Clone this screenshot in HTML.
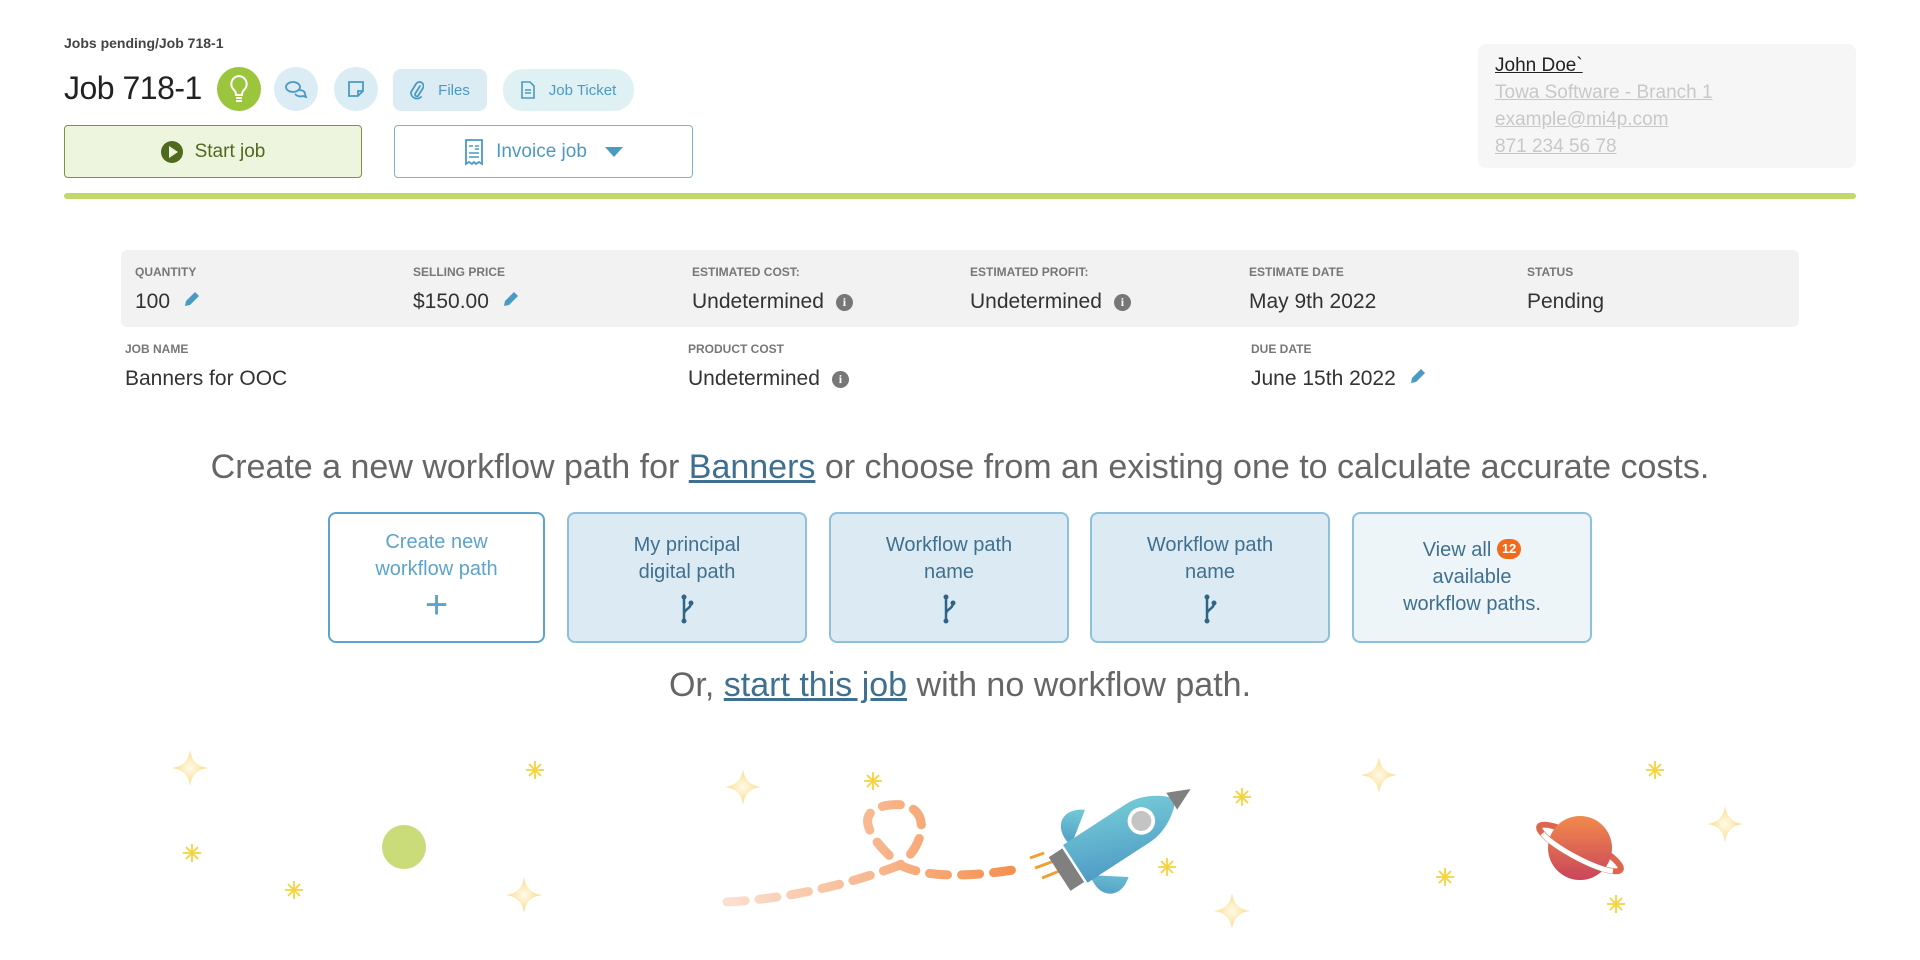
<!DOCTYPE html>
<html><head><meta charset="utf-8"><style>
*{box-sizing:border-box;margin:0;padding:0}
body{width:1920px;height:960px;background:#fff;font-family:"Liberation Sans",sans-serif;color:#333;position:relative;overflow:hidden}
.a{position:absolute}
.crumb{left:64px;top:35px;font-size:14px;font-weight:bold;color:#444}
.title{left:64px;top:70px;font-size:32px;color:#222;letter-spacing:-0.5px}
.circ{width:44px;height:44px;border-radius:50%;background:#dcecf4;top:67px;display:flex;align-items:center;justify-content:center}
.pill{top:69px;height:42px;border-radius:14px;background:#dcecf4;color:#4a9ac4;font-size:15px;display:flex;align-items:center;justify-content:center;gap:14px}
.btn{top:125px;height:53px;border-radius:4px;display:flex;align-items:center;justify-content:center;font-size:19px;gap:12px}
.lbl{font-size:12px;font-weight:bold;color:#777}
.val{font-size:21px;color:#333}
.info{display:inline-block;width:17px;height:17px;border-radius:50%;background:#777;color:#fff;font-size:12px;font-weight:bold;text-align:center;line-height:17px;margin-left:12px;vertical-align:2px;font-family:"Liberation Serif",serif}
.pen{display:inline-block;margin-left:12px;vertical-align:-1px}
.card{top:512px;height:131px;border-radius:8px;border:2px solid #8cc0dc;background:#dcebf3;color:#3f7090;font-size:20px;text-align:center;display:flex;flex-direction:column;align-items:center;justify-content:center;line-height:27px}
</style></head><body>
<div class="a crumb">Jobs pending/Job 718-1</div>
<div class="a title">Job 718-1</div>
<div class="a circ" style="left:217px;background:#9bc53d"><svg width="22" height="30" viewBox="0 0 22 30"><path d="M11 2a8 8 0 0 0-5 14c1 1 2 3 2 5h6c0-2 1-4 2-5a8 8 0 0 0-5-14z" fill="none" stroke="#fff" stroke-width="2"/><path d="M8 24h6M8 27h6" stroke="#fff" stroke-width="2"/></svg></div>
<div class="a circ" style="left:274px"><svg width="24" height="20" viewBox="0 0 24 20"><ellipse cx="9" cy="8" rx="7" ry="5" fill="none" stroke="#4a9ac4" stroke-width="1.8"/><path d="M14 11c4 0 7 1 7 4l1 3-3-1c-3 1-6 0-8-2" fill="none" stroke="#4a9ac4" stroke-width="1.8"/></svg></div>
<div class="a circ" style="left:334px"><svg width="18" height="18" viewBox="0 0 18 18"><path d="M2 2h14v9l-5 5H2z M11 16v-5h5" fill="none" stroke="#4a9ac4" stroke-width="1.8"/></svg></div>
<div class="a pill" style="left:393px;width:94px;border-radius:8px"><svg width="14" height="20" viewBox="0 0 14 20"><path d="M10 6l-5 8a2 2 0 0 0 3 2l5-8a4 4 0 0 0-7-4l-5 8a6 6 0 0 0 10 5" fill="none" stroke="#4a9ac4" stroke-width="1.8" stroke-linecap="round"/></svg>Files</div>
<div class="a pill" style="left:503px;width:131px;background:#e0f1f4;border-radius:20px"><svg width="14" height="18" viewBox="0 0 14 18"><path d="M1 1h8l4 4v12H1z M4 9h6M4 12h6" fill="none" stroke="#4a9ac4" stroke-width="1.6"/></svg>Job Ticket</div>
<div class="a btn" style="left:64px;width:298px;background:#eef5de;border:1.5px solid #7a9440;color:#4f6a1f"><span style="width:22px;height:22px;border-radius:50%;background:#4f6a1f;display:inline-flex;align-items:center;justify-content:center"><span style="border-left:9px solid #eef5de;border-top:6px solid transparent;border-bottom:6px solid transparent;margin-left:3px"></span></span>Start job</div>
<div class="a btn" style="left:394px;width:299px;background:#fff;border:1.5px solid #7ab3d4;color:#4a9ac4"><svg width="20" height="28" viewBox="0 0 20 28"><path d="M2 2h16v24l-3-2-3 2-2-2-2 2-3-2-3 2z" fill="none" stroke="#4a9ac4" stroke-width="1.8"/><path d="M5 8h4M11 8h4M11 11h4M5 15h10M5 19h10" stroke="#4a9ac4" stroke-width="1.6"/></svg>Invoice job <span style="border-top:10px solid #4a9ac4;border-left:9px solid transparent;border-right:9px solid transparent;margin-left:6px"></span></div>
<div class="a" style="left:64px;top:193px;width:1792px;height:6px;background:#c2d868;border-radius:3px"></div>
<div class="a" style="left:1478px;top:44px;width:378px;height:124px;background:#f6f6f6;border-radius:8px;padding:8px 17px;font-size:19px;line-height:27px">
<div style="color:#222;text-decoration:underline">John Doe`</div>
<div style="color:#c8c8c8;text-decoration:underline">Towa Software - Branch 1</div>
<div style="color:#c8c8c8;text-decoration:underline">example@mi4p.com</div>
<div style="color:#c8c8c8;text-decoration:underline">871 234 56 78</div></div>
<div class="a" style="left:121px;top:250px;width:1678px;height:77px;background:#f2f2f2;border-radius:6px"></div>
<div class="a lbl" style="left:135px;top:265px">QUANTITY</div>
<div class="a val" style="left:135px;top:290px">100<svg class="pen" width="18" height="18" viewBox="0 0 18 18"><path d="M3 15l1-5 9-9 4 4-9 9z" fill="#4a9ac4"/></svg></div>
<div class="a lbl" style="left:413px;top:265px">SELLING PRICE</div>
<div class="a val" style="left:413px;top:290px">$150.00<svg class="pen" width="18" height="18" viewBox="0 0 18 18"><path d="M3 15l1-5 9-9 4 4-9 9z" fill="#4a9ac4"/></svg></div>
<div class="a lbl" style="left:692px;top:265px">ESTIMATED COST:</div>
<div class="a val" style="left:692px;top:290px">Undetermined<span class="info">i</span></div>
<div class="a lbl" style="left:970px;top:265px">ESTIMATED PROFIT:</div>
<div class="a val" style="left:970px;top:290px">Undetermined<span class="info">i</span></div>
<div class="a lbl" style="left:1249px;top:265px">ESTIMATE DATE</div>
<div class="a val" style="left:1249px;top:290px">May 9th 2022</div>
<div class="a lbl" style="left:1527px;top:265px">STATUS</div>
<div class="a val" style="left:1527px;top:290px">Pending</div>
<div class="a lbl" style="left:125px;top:342px">JOB NAME</div>
<div class="a val" style="left:125px;top:367px">Banners for OOC</div>
<div class="a lbl" style="left:688px;top:342px">PRODUCT COST</div>
<div class="a val" style="left:688px;top:367px">Undetermined<span class="info">i</span></div>
<div class="a lbl" style="left:1251px;top:342px">DUE DATE</div>
<div class="a val" style="left:1251px;top:367px">June 15th 2022<svg class="pen" width="18" height="18" viewBox="0 0 18 18"><path d="M3 15l1-5 9-9 4 4-9 9z" fill="#4a9ac4"/></svg></div>
<div class="a" style="left:0;width:1920px;top:448px;text-align:center;font-size:34px;color:#666">Create a new workflow path for <span style="color:#3f7090;text-decoration:underline">Banners</span> or choose from an existing one to calculate accurate costs.</div>
<div class="a card" style="left:328px;width:217px;background:#fff;border-color:#5da3cb;color:#5da3cb"><div>Create new<br>workflow path</div><div style="font-size:40px;line-height:44px;font-weight:300">+</div></div>
<div class="a card" style="left:567px;width:240px"><div>My principal<br>digital path</div><svg width="16" height="30" viewBox="0 0 16 30" style="margin-top:8px"><path d="M5 3v24M5 20c0-5 7-5 7-11" fill="none" stroke="#2f6487" stroke-width="2.5"/><circle cx="5" cy="3" r="2.5" fill="#2f6487"/><circle cx="5" cy="27" r="2.5" fill="#2f6487"/><circle cx="12" cy="9" r="2.5" fill="#2f6487"/></svg></div>
<div class="a card" style="left:829px;width:240px"><div>Workflow path<br>name</div><svg width="16" height="30" viewBox="0 0 16 30" style="margin-top:8px"><path d="M5 3v24M5 20c0-5 7-5 7-11" fill="none" stroke="#2f6487" stroke-width="2.5"/><circle cx="5" cy="3" r="2.5" fill="#2f6487"/><circle cx="5" cy="27" r="2.5" fill="#2f6487"/><circle cx="12" cy="9" r="2.5" fill="#2f6487"/></svg></div>
<div class="a card" style="left:1090px;width:240px"><div>Workflow path<br>name</div><svg width="16" height="30" viewBox="0 0 16 30" style="margin-top:8px"><path d="M5 3v24M5 20c0-5 7-5 7-11" fill="none" stroke="#2f6487" stroke-width="2.5"/><circle cx="5" cy="3" r="2.5" fill="#2f6487"/><circle cx="5" cy="27" r="2.5" fill="#2f6487"/><circle cx="12" cy="9" r="2.5" fill="#2f6487"/></svg></div>
<div class="a card" style="left:1352px;width:240px;background:#edf5f9"><div>View all <span style="display:inline-block;background:#f26b1d;color:#fff;border-radius:11px;font-size:13px;font-weight:bold;line-height:20px;padding:0 5px;vertical-align:3px">12</span><br>available<br>workflow paths.</div></div>
<div class="a" style="left:0;width:1920px;top:666px;text-align:center;font-size:34px;color:#666">Or, <span style="color:#3f7090;text-decoration:underline">start this job</span> with no workflow path.</div>
<svg class="a" style="left:0;top:740px" width="1920" height="220" viewBox="0 740 1920 220">
<defs>
<radialGradient id="st"><stop offset="0" stop-color="#fffbe8"/><stop offset="1" stop-color="#fbd98a"/></radialGradient>
<linearGradient id="pl" x1="0" y1="0" x2="0" y2="1"><stop offset="0" stop-color="#f28a4c"/><stop offset="1" stop-color="#c9455a"/></linearGradient>
<linearGradient id="rk" x1="0" y1="1" x2="1" y2="0"><stop offset="0" stop-color="#4f9bc6"/><stop offset="1" stop-color="#79d0d8"/></linearGradient>
<linearGradient id="tr" x1="0" x2="1"><stop offset="0" stop-color="#fbe0d0"/><stop offset="1" stop-color="#f59050"/></linearGradient>
<g id="s4"><path d="M0-18Q2-2 18 0Q2 2 0 18Q-2 2-18 0Q-2-2 0-18z" fill="url(#st)"/></g>
<g id="s8" stroke="#f6d33c" stroke-width="1.8"><path d="M0-9v18M-9 0h18M-6-6l12 12M-6 6l12-12"/></g>
</defs>
<use href="#s4" x="190" y="768"/><use href="#s4" x="524" y="895"/><use href="#s4" x="743" y="787"/><use href="#s4" x="1379" y="775"/><use href="#s4" x="1725" y="824"/><use href="#s4" x="1232" y="911"/>
<use href="#s8" x="535" y="770"/><use href="#s8" x="192" y="853"/><use href="#s8" x="294" y="890"/><use href="#s8" x="873" y="781"/><use href="#s8" x="1167" y="867"/><use href="#s8" x="1242" y="797"/><use href="#s8" x="1655" y="770"/><use href="#s8" x="1445" y="877"/><use href="#s8" x="1616" y="904"/>
<circle cx="404" cy="847" r="22" fill="#c9dc79"/>
<g transform="translate(1580 848) rotate(28)">
<ellipse cx="0" cy="0" rx="46" ry="10" fill="none" stroke="#e0654f" stroke-width="6"/>
<circle cx="0" cy="0" r="32" fill="url(#pl)" transform="rotate(-28)"/>
<path d="M-40 5A46 10 0 0 0 40 5" fill="none" stroke="#fff" stroke-width="5"/>
</g>
<path d="M727 902C800 898 860 880 900 865C870 840 850 810 890 805C930 800 930 840 900 865C930 880 980 875 1013 870" fill="none" stroke="url(#tr)" stroke-width="9" stroke-linecap="round" stroke-dasharray="18 14"/>
<path d="M1030 858l14-5M1035 868l22-8M1042 878l20-8" stroke="#f0a030" stroke-width="3"/>
<g transform="translate(1112 840) rotate(-33) scale(1.25)">
<path d="M-30-14c-5-20 10-30 25-18z" fill="url(#rk)"/>
<path d="M-30 14c-5 20 10 30 25 18z" fill="url(#rk)"/>
<path d="M-35-18h60c15 0 30 10 35 18c-5 8-20 18-35 18h-60z" fill="url(#rk)"/>
<rect x="-50" y="-16" width="13" height="32" fill="#808080"/>
<path d="M57-8l18 8-18 8z" fill="#808080"/>
<circle cx="28" cy="0" r="11" fill="#fff"/><circle cx="28" cy="0" r="8" fill="#c4c4c4"/>
</g>
</svg>
</body></html>
